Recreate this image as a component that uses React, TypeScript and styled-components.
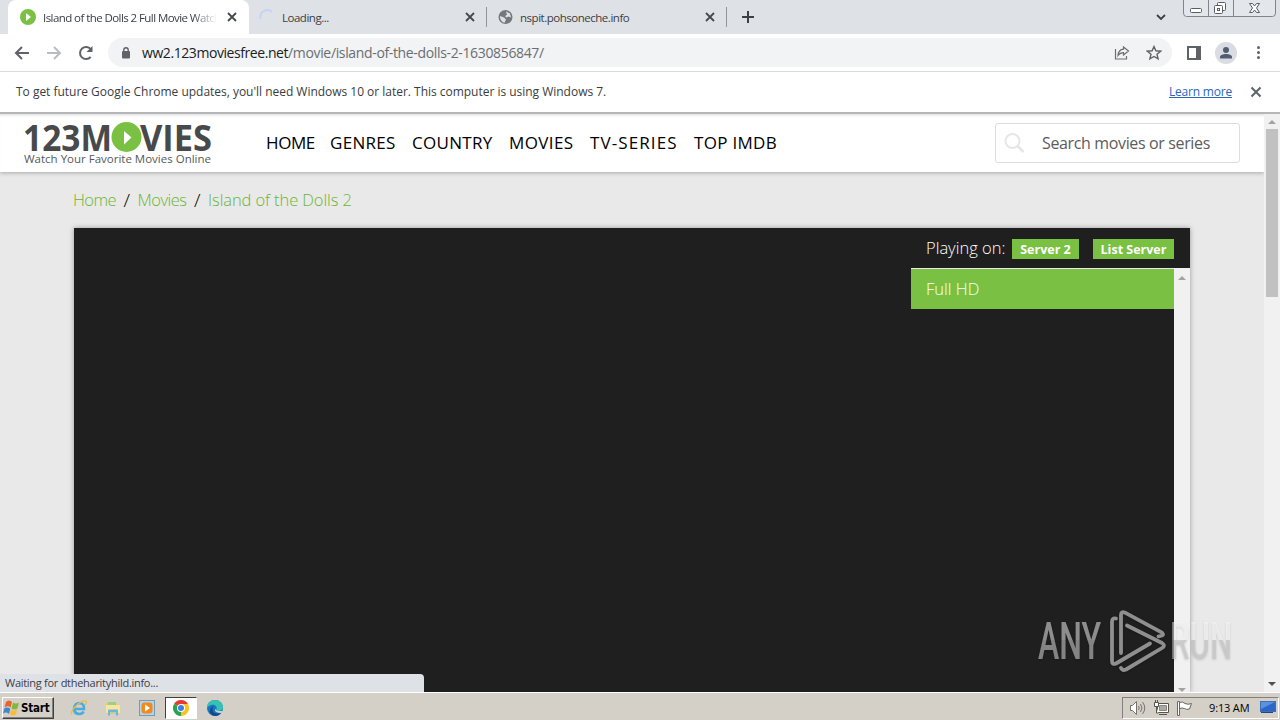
import styled, { createGlobalStyle, css } from "styled-components";

const ui = `"Open Sans", "Noto Sans", "DejaVu Sans", sans-serif`;
const green = "#7ac143";

export default function App() {
    return (
        <Screen>
            <GlobalStyle/>
            <TabStrip>
                <Tab $width={241} $active>
                    <PlayIcon size={16}/>
                    <TabTitle $fade>Island of the Dolls 2 Full Movie Watch</TabTitle>
                    <CloseIcon/>
                </Tab>
                <Tab $width={238} $divided>
                    <Spinner/>
                    <TabTitle>Loading...</TabTitle>
                    <CloseIcon/>
                </Tab>
                <Tab $width={240} $divided>
                    <GlobeIcon/>
                    <TabTitle>nspit.pohsoneche.info</TabTitle>
                    <CloseIcon/>
                </Tab>
                <NewTab>
                    <Stroke size={14} d="M7 1v12M1 7h12" color="#3c4043" width={2}/>
                </NewTab>
                <StripEnd>
                    <Stroke size={12} d="M2 4l4 4 4-4" color="#3c4043" width={1.8}/>
                    <WindowControls/>
                </StripEnd>
            </TabStrip>

            <Toolbar>
                <NavButton>
                    <Stroke size={16} d="M15 8H2M8 2L2 8l6 6" color="#5f6368" width={2}/>
                </NavButton>
                <NavButton>
                    <Stroke size={16} d="M1 8h13M8 2l6 6-6 6" color="#babcbe" width={2}/>
                </NavButton>
                <NavButton>
                    <svg width="16" height="16" viewBox="0 0 16 16">
                        <path d="M12.6 12A6 6 0 1 1 12.8 4.4" fill="none" stroke="#5f6368" strokeWidth="2"/>
                        <path d="M14.5 1v6h-6z" fill="#5f6368"/>
                    </svg>
                </NavButton>
                <AddressBar>
                    <svg width="8" height="12" viewBox="0 0 8 12">
                        <path d="M1.8 5V3a2.2 2.2 0 0 1 4.4 0V5" fill="none" stroke="#5f6368" strokeWidth="1.4"/>
                        <rect y="4" width="8" height="7.5" rx="1" fill="#5f6368"/>
                    </svg>
                    <Url><b>ww2.123moviesfree.net</b>/movie/island-of-the-dolls-2-1630856847/</Url>
                    <ShareIcon/>
                    <svg width="16" height="16" viewBox="0 0 16 16">
                        <path d="M8 1.5l1.9 4.3 4.7.4-3.6 3.1 1.1 4.6L8 11.5l-4.1 2.4L5 9.3 1.4 6.2l4.7-.4z" fill="none" stroke="#5f6368" strokeWidth="1.4"/>
                    </svg>
                </AddressBar>
                <SidePanelIcon/>
                <Avatar>
                    <svg width="14" height="14" viewBox="0 0 14 14" fill="#525c73">
                        <circle cx="7" cy="4" r="3"/>
                        <path d="M1 12.5V11c0-2 3-3 6-3s6 1 6 3v1.5z"/>
                    </svg>
                </Avatar>
                <MenuDots><i/><i/><i/></MenuDots>
            </Toolbar>

            <InfoBar>
                <InfoText>To get future Google Chrome updates, you'll need Windows 10 or later. This computer is using Windows 7.</InfoText>
                <LearnMore>Learn more</LearnMore>
                <Stroke size={12} d="M1.5 1.5l9 9M10.5 1.5l-9 9" color="#5f6368" width={2}/>
            </InfoBar>

            <Viewport>
                <Page>
                    <SiteHeader>
                        <Logo/>
                        <Menu>
                            <MenuItem $width={64} $spacing={-0.4}>HOME</MenuItem>
                            <MenuItem $width={82} $spacing={0.3}>GENRES</MenuItem>
                            <MenuItem $width={97} $spacing={0.3}>COUNTRY</MenuItem>
                            <MenuItem $width={81} $spacing={0.4}>MOVIES</MenuItem>
                            <MenuItem $width={104} $spacing={1.1}>TV-SERIES</MenuItem>
                            <MenuItem $width={90} $spacing={0.3}>TOP IMDB</MenuItem>
                        </Menu>
                        <Search>
                            <svg width="22" height="22" viewBox="0 0 22 22" fill="none" stroke="#e6e6e6" strokeWidth="2">
                                <circle cx="8.5" cy="9" r="7"/>
                                <path d="M13.5 14l6 6" strokeWidth="2.6"/>
                            </svg>
                            <span>Search movies or series</span>
                        </Search>
                    </SiteHeader>
                    <Breadcrumb>
                        <Crumb $width={43}>Home</Crumb>
                        <Slash>/</Slash>
                        <Crumb $width={49}>Movies</Crumb>
                        <Slash>/</Slash>
                        <Crumb $width={150} $spacing={-0.1}>Island of the Dolls 2</Crumb>
                    </Breadcrumb>
                    <Player>
                        <PlayerTop>
                            <Playing>Playing on:</Playing>
                            <Badge $width={67}>Server 2</Badge>
                            <Badge $width={81}>List Server</Badge>
                        </PlayerTop>
                        <PlayerBody>
                            <ServerList>
                                <Quality>Full HD</Quality>
                            </ServerList>
                            <InnerScroll>
                                <Arrow $up/>
                                <Arrow/>
                            </InnerScroll>
                        </PlayerBody>
                    </Player>
                </Page>
                <PageScroll>
                    <Arrow $up/>
                    <Thumb/>
                    <Arrow $dark/>
                </PageScroll>
                <Status>Waiting for dtheharityhild.info...</Status>
                <Watermark/>
            </Viewport>

            <Taskbar>
                <Start>
                    <WindowsFlag/>
                    Start
                </Start>
                <TaskButton><ExplorerE/></TaskButton>
                <TaskButton><FolderIcon/></TaskButton>
                <TaskButton><MediaIcon/></TaskButton>
                <TaskButton $pressed><ChromeIcon/></TaskButton>
                <TaskButton><EdgeIcon/></TaskButton>
                <Tray>
                    <SpeakerIcon/>
                    <NetworkIcon/>
                    <FlagIcon/>
                    <Clock>9:13 AM</Clock>
                    <DesktopIcon/>
                </Tray>
            </Taskbar>
        </Screen>
    );
}

type StrokeProps = { size: number; d: string; color: string; width: number };

const Stroke = ({size, d, color, width}: StrokeProps) => (
    <svg width={size} height={size} viewBox={`0 0 ${size} ${size}`}>
        <path d={d} fill="none" stroke={color} strokeWidth={width}/>
    </svg>
);

const CloseIcon = () => <Stroke size={10} d="M1 1l8 8M9 1L1 9" color="#45494d" width={1.8}/>;

const PlayIcon = ({size}: { size: number }) => (
    <svg width={size} height={size} viewBox="0 0 16 16">
        <circle cx="8" cy="8" r="8" fill={green}/>
        <path d="M6 4l5 4-5 4z" fill="#fff"/>
    </svg>
);

const Spinner = () => (
    <svg width="16" height="16" viewBox="0 0 16 16">
        <path d="M1.5 10A7 7 0 0 1 13 3" fill="none" stroke="#c3d5f3" strokeWidth="1.8"/>
    </svg>
);

const GlobeIcon = () => (
    <svg width="16" height="16" viewBox="0 0 16 16">
        <circle cx="8.5" cy="8" r="7" fill="#75797d"/>
        <path d="M9 2.5l4 2 1 4-2.5-1-2 1L8 7l2-1.200zM3 7l4 1.500 2 2-1.500 3.300C5 13 3 11 3 7z" fill="#dee1e6"/>
    </svg>
);

const ShareIcon = () => (
    <svg width="16" height="16" viewBox="0 0 16 16" fill="none" stroke="#6b6f74" strokeWidth="1.2">
        <path d="M1.500 4v10h11v-3M9.500 2l5 4-5 4V7.700C7 7.700 5.500 8.500 4 10.500c.3-3.500 2-6 5.500-6.300z"/>
    </svg>
);

const SidePanelIcon = () => (
    <svg width="14" height="14" viewBox="0 0 14 14">
        <path d="M1 1h12v12H1z" fill="none" stroke="#5f6368" strokeWidth="2"/>
        <path d="M9 1h4v12H9z" fill="#5f6368"/>
    </svg>
);

const WindowControls = () => (
    <svg width="94" height="17" viewBox="0 0 94 17" fill="none" stroke="#80848c">
        <path d="M.5 0v13q0 3.500 3 3.500h86q3 0 3-3.500V0M25.500 0v16M50.500 0v16" fill="#e3e6ea"/>
        <g stroke="#595d66" fill="#fff">
            <rect x="7.500" y="8.500" width="11" height="4" rx="1"/>
            <rect x="34.500" y="2.500" width="8" height="8" rx="1"/>
            <rect x="31.500" y="5.500" width="8" height="8" rx="1"/>
            <rect x="34.500" y="8.500" width="2" height="2"/>
            <path d="M66.500 3.500h3l2 2.500 2-2.500h3L73.500 8l3 4.500h-3l-2-2.500-2 2.500h-3l3-4.500z"/>
        </g>
    </svg>
);

const Logo = () => (
    <LogoSvg width="190" height="46" viewBox="0 0 190 46">
        <g fill="#48494b" fontFamily="Open Sans" fontWeight="700" fontSize="36.5">
            <text x="-1" y="28.5" textLength="89" lengthAdjust="spacingAndGlyphs">123M</text>
            <text x="116" y="28.5" textLength="72" lengthAdjust="spacingAndGlyphs">VIES</text>
        </g>
        <circle cx="102.5" cy="15" r="15" fill={green}/>
        <path d="M100 9l7.500 6.500-7.500 7z" fill="#fff"/>
        <text x="0" y="41" fill="#58595b" fontFamily="Open Sans" fontSize="11.5" textLength="187">Watch Your Favorite Movies Online</text>
    </LogoSvg>
);

const Watermark = () => (
    <WatermarkSvg width="200" height="66" viewBox="0 0 200 66">
        <linearGradient id="letters" gradientUnits="userSpaceOnUse" x1="0" y1="14" x2="0" y2="51">
            <stop offset=".5" stopColor="#fff" stopOpacity=".5"/>
            <stop offset=".5" stopColor="#c4c4c4" stopOpacity=".62"/>
        </linearGradient>
        <g fill="url(#letters)" fontFamily="Roboto" fontWeight="500" fontSize="51">
            <text x="2" y="51" textLength="63" lengthAdjust="spacingAndGlyphs">ANY</text>
            <text x="134" y="51" textLength="62" lengthAdjust="spacingAndGlyphs">RUN</text>
        </g>
        <g fill="none" stroke="#8f8f8f" strokeWidth="3.8" strokeLinejoin="round" strokeLinecap="round">
            <path d="M80 10.500q-4-1-4 3.500v39q0 4 4 2.500l34-20"/>
            <path d="M85 45V7q0-4 4-2.300l37 20q3 3.300-3.500 3.600"/>
            <path d="M91 17.500l35 17.500q4 2.500 0 5L90 61.500q-3.500 1.500-5-1.500"/>
        </g>
    </WatermarkSvg>
);

const WindowsFlag = () => (
    <svg width="17" height="16" viewBox="0 0 17 16">
        <path d="M3 2q3-3 6 0L7.500 7.500Q5 5 1.500 7.500z" fill="#e8642c"/>
        <path d="M10 2.500q3 2 6 0L14.500 8.500q-3 2-6 0z" fill="#80b940"/>
        <path d="M1.300 8.500q3-2 6 .2L6 14q-3-2.500-6-.5z" fill="#4584cf"/>
        <path d="M8.200 9.500q3 2 6 0L13 14.500q-3 2-6 0z" fill="#f8bd32"/>
    </svg>
);

const ExplorerE = () => (
    <svg width="18" height="18" viewBox="0 0 18 18" fill="none">
        <path d="M4 10h10q.5-5.500-4.500-6Q4.500 4 4 10q.5 5 5.500 5 3 0 4-2.500" stroke="#49acdf" strokeWidth="2.6"/>
        <path d="M2 15.500Q0 13 6 7t9.500-5q2 .5 0 4" stroke="#e8bd48" strokeWidth="1.3"/>
    </svg>
);

const FolderIcon = () => (
    <svg width="16" height="16" viewBox="0 0 16 16">
        <path d="M1 3h5l1 1.500h7V14H1z" fill="#e9c767"/>
        <path d="M3 2h8v4H3z" fill="#9fd07d"/>
        <path d="M1 5h14v8H1z" fill="#f7e6a0"/>
        <path d="M3 15.500v-5q0-1 1-1h8q1 0 1 1v5h-2v-3H5v3z" fill="#6db6dd"/>
    </svg>
);

const MediaIcon = () => (
    <svg width="16" height="16" viewBox="0 0 16 16">
        <rect x=".5" y=".5" width="15" height="15" fill="#b7d3e8" stroke="#719dbd"/>
        <rect x="2.5" y="2.5" width="11" height="11" rx="3" fill="#f08a1c"/>
        <path d="M6 4.500l5 3.500-5 3.500z" fill="#fff"/>
    </svg>
);

const ChromeIcon = () => (
    <svg width="16" height="16" viewBox="0 0 16 16">
        <path d="M8 8L1.070 4A8 8 0 0 1 14.930 4z" fill="#e33b2e"/>
        <path d="M8 8L14.930 4A8 8 0 0 1 8 16z" fill="#fcc31e"/>
        <path d="M8 8v8A8 8 0 0 1 1.070 4z" fill="#2ba24c"/>
        <path d="M8 4h6.930L11.500 10z" fill="#fcc31e"/>
        <circle cx="8" cy="8" r="4" fill="#fff"/>
        <circle cx="8" cy="8" r="3" fill="#3c7de6"/>
    </svg>
);

const EdgeIcon = () => (
    <svg width="16" height="16" viewBox="0 0 16 16">
        <circle cx="8" cy="8" r="8" fill="#1574c4"/>
        <path d="M0 8C0 3 4 0 8 0c5 0 8 3.500 8 7 0 3-2.500 4-4.500 4-2 0-2.500-1-2-2C10.500 6 7 4 4 5 1.500 6 .5 7 0 8z" fill="#36c2b2"/>
        <path d="M5.500 9c0 4 4 5.500 8.500 4-3 4-8.500 3.500-10.500.5C2 11 3.500 7 6.500 6.500 6 7 5.500 8 5.500 9z" fill="#114a8b"/>
        <path d="M8.500 8.500q0 3 7 2.500l-1 2Q10 13.500 8 11z" fill="#d4d0c8"/>
    </svg>
);

const SpeakerIcon = () => (
    <svg width="17" height="16" viewBox="0 0 17 16" fill="none" stroke="#77736c">
        <path d="M1.500 5.500h2l4-4v13l-4-4h-2z" fill="#fff"/>
        <path d="M9.500 6q1.500 2 0 4M11.500 4q3 4 0 8M13.500 2q4.500 6 0 12"/>
    </svg>
);

const NetworkIcon = () => (
    <svg width="16" height="16" viewBox="0 0 16 16" fill="none" stroke="#58544e">
        <path d="M4.500 3.500h11v9h-11z" fill="#fff"/>
        <path d="M6.500 5.500h7v5h-7z" fill="#aaa9a5" stroke="#8b8882"/>
        <path d="M6 14.500h8"/>
        <path d="M1.500 2.500h4v4h-4zM2.500 0v2M4.500 0v2M3.500 7v6h2" fill="#fff"/>
    </svg>
);

const FlagIcon = () => (
    <svg width="17" height="16" viewBox="0 0 17 16" stroke="#6b675f">
        <path d="M1.500 1.500h2v14h-2zM3.500 2.500q3-1.500 5.500 1 3 1.500 6.500 0l-2 5.500q-3 1-5-.5-2-1-5 0z" fill="#fff"/>
    </svg>
);

const DesktopIcon = () => (
    <svg width="16" height="13" viewBox="0 0 16 13">
        <rect x=".5" y=".5" width="15" height="10" fill="#2c66c8" stroke="#3f6fb5"/>
        <path d="M1 1h14L1 8z" fill="#5a92e0"/>
        <path d="M1 11.500h12" stroke="#24487e"/>
    </svg>
);

const GlobalStyle = createGlobalStyle`
    body {
        margin: 0;
    }

    * {
        box-sizing: border-box;
    }

    svg {
        display: block;
        flex: none;
    }
`
const Screen = styled.div`
    width: 1280px;
    height: 720px;
    overflow: hidden;
    display: flex;
    flex-direction: column;
    font-family: ${ui};
    white-space: nowrap;
    background: #fff;
`
const TabStrip = styled.div`
    height: 34px;
    flex: none;
    display: flex;
    padding-left: 8px;
    background: #dee1e6;
`
const Tab = styled.div<{ $width: number; $active?: boolean; $divided?: boolean }>`
    width: ${p => p.$width}px;
    height: 34px;
    flex: none;
    display: flex;
    align-items: center;
    gap: 7px;
    padding: 0 12px 0 ${p => p.$active ? 12 : 10}px;
    ${p => p.$active && css`
        background: #fff;
        border-radius: 8px 8px 0 0;
    `}
    ${p => p.$divided && css`
        background: linear-gradient(#9195a0, #9195a0) right 7px / 1px 20px no-repeat;
    `}
`
const TabTitle = styled.span<{ $fade?: boolean }>`
    flex: 1;
    overflow: hidden;
    font-size: 11.5px;
    letter-spacing: -0.48px;
    color: #3c4043;
    ${p => p.$fade && css`
        margin-right: 3px;
        letter-spacing: -0.57px;
        mask-image: linear-gradient(90deg, #000 86%, transparent);
    `}
`
const NewTab = styled.div`
    display: flex;
    align-items: center;
    padding-left: 14px;
`
const StripEnd = styled.div`
    margin-left: auto;
    display: flex;
    gap: 16px;
    padding-right: 3px;

    > svg:first-child {
        margin-top: 11px;
    }
`
const Toolbar = styled.div`
    height: 38px;
    flex: none;
    display: flex;
    align-items: center;
    padding: 0 14px;
    border-bottom: 1px solid #d8dadc;
`
const NavButton = styled.div`
    width: 32px;
`
const AddressBar = styled.div`
    width: 1064px;
    height: 29px;
    display: flex;
    align-items: center;
    gap: 16px;
    padding: 0 10px 0 14px;
    margin: 0 15px 0 -2px;
    border-radius: 15px;
    background: #f1f3f4;
`
const Url = styled.span`
    flex: 1;
    margin-left: -4px;
    font-size: 14px;
    letter-spacing: -0.35px;
    color: #6a6e73;

    b {
        font-weight: 400;
        letter-spacing: -0.43px;
        color: #202124;
    }
`
const Avatar = styled.div`
    width: 22px;
    height: 22px;
    flex: none;
    display: grid;
    place-items: center;
    margin: 0 20px 0 14px;
    border-radius: 50%;
    background: #d9dce2;
`
const MenuDots = styled.div`
    display: grid;
    gap: 2px;

    i {
        width: 3px;
        height: 3px;
        border-radius: 50%;
        background: #5f6368;
    }
`
const InfoBar = styled.div`
    height: 40px;
    flex: none;
    display: flex;
    align-items: center;
    padding: 0 18px 0 16px;
    font-size: 12px;
    color: #3a3d40;
`
const InfoText = styled.span`
    flex: 1;
    padding-bottom: 2px;
    letter-spacing: -0.02px;
`
const LearnMore = styled.a`
    margin-right: 18px;
    padding-bottom: 2px;
    letter-spacing: -0.2px;
    color: #2a66bd;
    text-decoration: underline;
`
const Viewport = styled.div`
    position: relative;
    height: 580px;
    flex: none;
    display: flex;
    overflow: hidden;
    border-top: 2px solid #b4b6b8;
    background: #e9e9e9;
`
const Page = styled.div`
    width: 1264px;
    display: flex;
    flex-direction: column;
`
const SiteHeader = styled.div`
    height: 58px;
    flex: none;
    display: flex;
    align-items: center;
    padding: 0 24px;
    background: #fff;
    box-shadow: 0 1px 4px rgba(0, 0, 0, .28), inset 0 3px 3px -2px rgba(0, 0, 0, .15);
`
const LogoSvg = styled.svg`
    margin-top: 3px;
    overflow: visible;
`
const Menu = styled.div`
    display: flex;
    margin-left: 52px;
    padding-bottom: 2px;
`
const MenuItem = styled.span<{ $width: number; $spacing: number }>`
    width: ${p => p.$width}px;
    font-size: 17px;
    letter-spacing: ${p => p.$spacing}px;
    color: #000;
`
const Search = styled.div`
    width: 245px;
    height: 40px;
    display: flex;
    align-items: center;
    gap: 16px;
    margin-left: auto;
    padding-left: 8px;
    border: 1px solid #dcdcdc;
    border-radius: 3px;
    font-size: 16px;
    letter-spacing: -0.36px;
    color: #5c5c5c;
`
const Breadcrumb = styled.div`
    height: 56px;
    flex: none;
    display: flex;
    align-items: center;
    padding: 0 0 1px 73px;
    font-size: 16.5px;
`
const Crumb = styled.span<{ $width: number; $spacing?: number }>`
    width: ${p => p.$width}px;
    font-weight: 300;
    letter-spacing: ${p => p.$spacing ?? -0.5}px;
    color: #69b533;
`
const Slash = styled.span`
    width: 21.5px;
    text-align: center;
    font-size: 19px;
    font-weight: 300;
    color: #000;
`
const Player = styled.div`
    width: 1116px;
    height: 464px;
    margin-left: 74px;
    display: flex;
    flex-direction: column;
    background: #1f1f1f;
    box-shadow: 0 0 5px rgba(0, 0, 0, .35);
`
const PlayerTop = styled.div`
    height: 40px;
    flex: none;
    display: flex;
    align-items: center;
    justify-content: flex-end;
    padding: 2px 16px 0 0;
`
const Playing = styled.span`
    width: 86px;
    padding-bottom: 3px;
    font-size: 16.5px;
    font-weight: 300;
    color: #fff;
`
const Badge = styled.span<{ $width: number }>`
    width: ${p => p.$width}px;
    height: 20px;
    line-height: 21px;
    text-align: center;
    font-size: 12.5px;
    font-weight: 700;
    color: #fff;
    background: ${green};

    & + & {
        margin-left: 14px;
    }
`
const PlayerBody = styled.div`
    flex: 1;
    display: flex;
    justify-content: flex-end;
`
const ServerList = styled.div`
    width: 263px;
    border-top: 1px solid #e8e8e8;
`
const Quality = styled.div`
    height: 40px;
    line-height: 40px;
    padding-left: 15px;
    font-size: 16.5px;
    font-weight: 300;
    color: #fff;
    background: ${green};
`
const InnerScroll = styled.div`
    width: 16px;
    display: flex;
    flex-direction: column;
    align-items: center;
    justify-content: space-between;
    padding: 8px 0 0;
    background: #f1f1f1;
`
const Arrow = styled.i<{ $up?: boolean; $dark?: boolean }>`
    border: 4px solid transparent;
    ${p => p.$up
        ? css`border-top: 0; border-bottom-color: #a3a3a3;`
        : css`border-bottom: 0; border-top-color: ${p.$dark ? "#505050" : "#a3a3a3"};`}
`
const PageScroll = styled.div`
    width: 16px;
    display: flex;
    flex-direction: column;
    align-items: center;
    padding: 6px 0;
    background: #f1f1f1;

    > i:last-child {
        margin-top: auto;
    }
`
const Thumb = styled.div`
    width: 12px;
    height: 168px;
    margin-top: 5px;
    background: #c1c1c1;
`
const Status = styled.div`
    position: absolute;
    left: 0;
    bottom: 0;
    width: 424px;
    height: 18px;
    padding-left: 5px;
    line-height: 18px;
    font-size: 11px;
    letter-spacing: -0.28px;
    color: #3c4043;
    border-radius: 0 4px 0 0;
    background: #dee1e6;
`
const WatermarkSvg = styled.svg`
    position: absolute;
    left: 1036px;
    top: 494px;
    overflow: visible;
    filter: drop-shadow(0 1px 1px rgba(0, 0, 0, .2));
`
const Taskbar = styled.div`
    height: 28px;
    flex: none;
    display: flex;
    align-items: center;
    padding: 2px 1px 0 2px;
    border-top: 1px solid #fff;
    background: #d4d0c8;
`
const Start = styled.div`
    width: 52px;
    height: 22px;
    display: flex;
    align-items: center;
    gap: 1px;
    margin-right: 8px;
    font-family: "DejaVu Sans Condensed", "DejaVu Sans", sans-serif;
    font-size: 11.5px;
    font-weight: 700;
    letter-spacing: -0.2px;
    color: #000;
    border: 1px solid;
    border-color: #fff #404040 #404040 #fff;
    box-shadow: inset -1px -1px #808080;
`
const TaskButton = styled.div<{ $pressed?: boolean }>`
    width: ${p => p.$pressed ? 32 : 34}px;
    height: 22px;
    display: grid;
    place-items: center;
    ${p => p.$pressed && css`
        margin: 0 1px;
        background: #fff;
        border: 1px solid;
        border-color: #404040 #fff #fff #404040;
    `}
`
const Tray = styled.div`
    width: 157px;
    height: 22px;
    display: flex;
    align-items: center;
    gap: 7px;
    margin-left: auto;
    padding-left: 6px;
    border: 1px solid;
    border-color: #808080 #fff #fff #808080;
`
const Clock = styled.span`
    width: 44px;
    margin-left: 9px;
    font-size: 11px;
    letter-spacing: -0.15px;
    color: #000;
`
